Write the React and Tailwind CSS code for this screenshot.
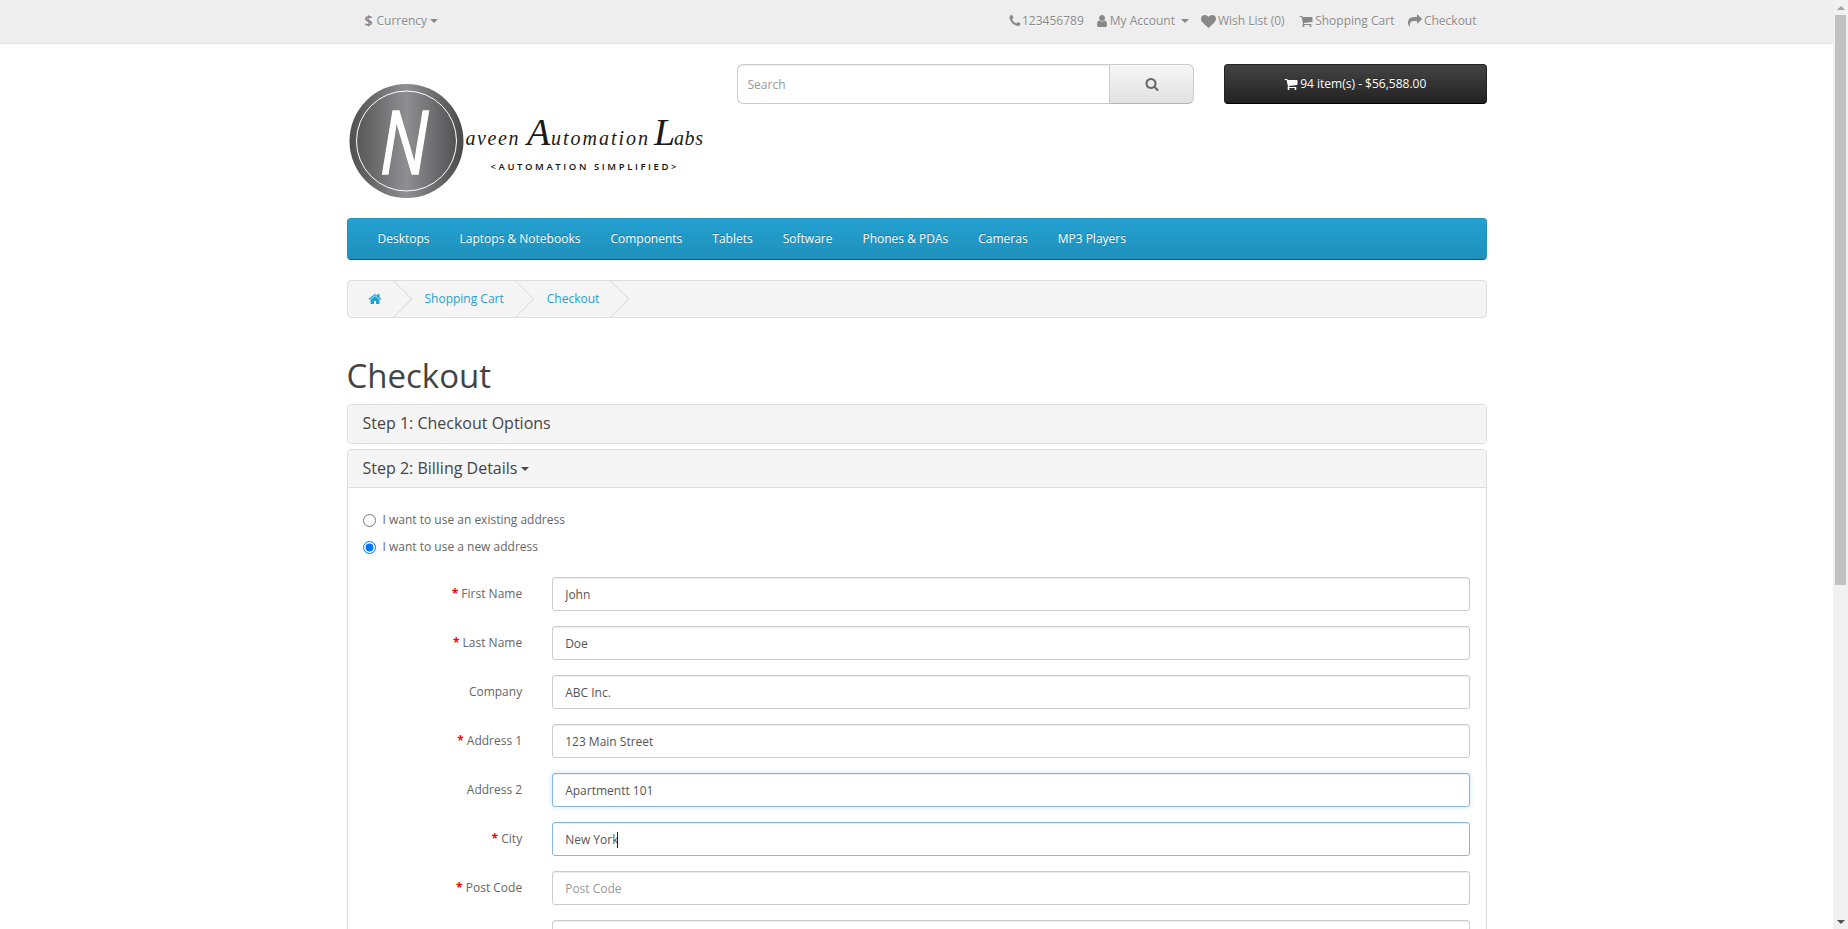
import React from 'react'

const FONT = "font-['Open_Sans',sans-serif]"

const ICONS = {
  phone: 'M1600 1240q0 27-10 70.5t-21 68.5q-21 50-122 106-94 51-186 51-27 0-53-3.5t-57.5-12.5-47-14.5-55.5-20.5-49-18q-98-35-175-83-127-79-264-216t-216-264q-48-77-83-175-3-9-18-49t-20.5-55.5-14.5-47-12.5-57.5-3.5-53q0-92 51-186 56-101 106-122 25-11 68.5-21t70.5-10q14 0 21 3 18 6 53 76 11 19 30 54t35 63.5 31 53.5q3 4 17.5 25t21.5 35.5 7 28.5q0 20-28.5 50t-62 55-62 53-28.5 46q0 9 5 22.5t8.5 20.5 14 24 11.5 19q76 137 174 235t235 174q2 1 19 11.5t24 14 20.5 8.5 22.5 5q18 0 46-28.5t53-62 55-62 50-28.5q14 0 28.5 7t35.5 21.5 25 17.5q25 15 53.5 31t63.5 35 54 30q70 35 76 53 3 7 3 21z',
  user: 'M1536 1399q0 109-62.5 187t-150.5 78h-854q-88 0-150.5-78t-62.5-187q0-85 8.5-160.5t31.5-152 58.5-131 94-89 134.5-34.5q131 128 313 128t313-128q76 0 134.5 34.5t94 89 58.5 131 31.5 152 8.5 160.5zm-256-887q0 159-112.5 271.5t-271.5 112.5-271.5-112.5-112.5-271.5 112.5-271.5 271.5-112.5 271.5 112.5 112.5 271.5z',
  heart: 'M896 1664q-26 0-44-18l-624-602q-10-8-27.5-26t-55.5-65.5-68-97.5-53.5-121-23.5-138q0-220 127-344t351-124q62 0 126.5 21.5t120 58 95.5 68.5 76 68q36-36 76-68t95.5-68.5 120-58 126.5-21.5q224 0 351 124t127 344q0 221-229 450l-623 600q-18 18-44 18z',
  cart: 'M704 1536q0 52-38 90t-90 38-90-38-38-90 38-90 90-38 90 38 38 90zm896 0q0 52-38 90t-90 38-90-38-38-90 38-90 90-38 90 38 38 90zm128-1088v512q0 24-16.5 42.5t-40.5 21.5l-1044 122q13 60 13 70 0 16-24 64h920q26 0 45 19t19 45-19 45-45 19h-1024q-26 0-45-19t-19-45q0-11 8-31.5t16-36 21.5-40 15.5-29.5l-177-823h-204q-26 0-45-19t-19-45 19-45 45-19h256q16 0 28.5 6.5t19.5 15.5 13 24.5 8 26 5.5 29.5 4.5 26h1201q26 0 45 19t19 45z',
  share: 'M1792 640q0 26-19 45l-512 512q-19 19-45 19t-45-19-19-45v-256h-224q-98 0-175.5 6t-154 21.5-133 42.5-105.5 69.5-80 101-48.5 138.5-17.5 181q0 55 5 123 0 6 2.5 23.5t2.5 26.5q0 15-8.5 25t-23.5 10q-16 0-28-17-7-9-13-22t-13.5-30-10.5-24q-127-285-127-451 0-199 53-333 162-403 875-403h224v-256q0-26 19-45t45-19 45 19l512 512q19 19 19 45z',
  search: 'M1216 832q0-185-131.5-316.5t-316.5-131.5-316.5 131.5-131.5 316.5 131.5 316.5 316.5 131.5 316.5-131.5 131.5-316.5zm512 832q0 52-38 90t-90 38q-54 0-90-38l-343-342q-179 124-399 124-143 0-273.5-55.5t-225-150-150-225-55.5-273.5 55.5-273.5 150-225 225-150 273.5-55.5 273.5 55.5 225 150 150 225 55.5 273.5q0 220-124 399l343 343q37 37 37 90z',
  home: 'M1472 992v480q0 26-19 45t-45 19h-384v-384h-256v384h-384q-26 0-45-19t-19-45v-480q0-1 .5-3t.5-3l575-474 575 474q1 2 1 6zm223-69l-62 74q-8 9-21 11h-3q-13 0-21-7l-692-577-692 577q-12 8-24 7-13-2-21-11l-62-74q-8-10-7-23.5t11-21.5l719-599q32-26 76-26t76 26l244 204v-195q0-14 9-23t23-9h192q14 0 23 9t9 23v408l219 182q10 8 11 21.5t-7 23.5z',
}

const Icon = ({ name, className = 'w-[14px] h-[14px]' }) => (
  <svg viewBox="0 0 1792 1792" className={`inline-block shrink-0 fill-current ${className}`}>
    <path d={ICONS[name]} />
  </svg>
)

const Caret = ({ className = 'ml-1 border-t-[4px] border-x-[4px] border-t-[#888]' }) => (
  <span className={`inline-block w-0 h-0 border-x-transparent ${className}`} />
)

const MENU = ['Desktops', 'Laptops & Notebooks', 'Components', 'Tablets', 'Software', 'Phones & PDAs', 'Cameras', 'MP3 Players']

const FIELDS = [
  { label: 'First Name', value: 'John', required: true },
  { label: 'Last Name', value: 'Doe', required: true },
  { label: 'Company', value: 'ABC Inc.' },
  { label: 'Address 1', value: '123 Main Street', required: true },
  { label: 'Address 2', value: 'Apartmentt 101', focus: 'glow' },
  { label: 'City', value: 'New York', required: true, focus: 'line', caret: true },
  { label: 'Post Code', placeholder: 'Post Code', required: true },
  // next row starts right at the fold, only its input shows
  { label: '', placeholder: '' },
]

function Logo() {
  const script = { fill: '#1a1a1a', fontFamily: "'Liberation Serif',serif", fontStyle: 'italic' }
  return (
    <svg viewBox="0 0 360 122" className="block w-[360px] h-[122px]">
      <defs>
        <linearGradient id="disc" x1="0" x2="1" y1="0" y2="0">
          <stop offset="0" stopColor="#4f4f4f" />
          <stop offset="0.5" stopColor="#8f8f92" />
          <stop offset="1" stopColor="#4a4a4a" />
        </linearGradient>
      </defs>
      <circle cx="59.5" cy="60" r="57" fill="url(#disc)" />
      <circle cx="59.5" cy="60" r="50" fill="none" stroke="#fff" strokeWidth="1" />
      <text x="0" y="0" transform="translate(57 93) scale(1.15 1.45)" textAnchor="middle" fill="#fff" stroke="#fff" strokeWidth="1" fontSize="60" fontFamily="'Open Sans',sans-serif" fontStyle="italic">N</text>
      <text x="118.5" y="64" {...script} fontSize="20" textLength="53" lengthAdjust="spacing">aveen</text>
      <text x="180" y="64" {...script} fontSize="38">A</text>
      <text x="204" y="64" {...script} fontSize="20" textLength="97" lengthAdjust="spacing">utomation</text>
      <text x="307" y="64" {...script} fontSize="38">L</text>
      <text x="327" y="64" {...script} fontSize="20" textLength="29" lengthAdjust="spacing">abs</text>
      <text x="143.5" y="89" fill="#111" fontSize="9.5" fontWeight="600" fontFamily="'Open Sans',sans-serif" textLength="186" lengthAdjust="spacing">&lt;AUTOMATION SIMPLIFIED&gt;</text>
    </svg>
  )
}

function Crumb({ children }) {
  return (
    <li className="relative flex items-center h-5 px-5">
      {children}
      {/* chevron divider */}
      <span className="absolute top-[-3px] right-[-5px] w-[26px] h-[26px] rotate-45 border-t border-r border-[#ddd]" />
    </li>
  )
}

function Field({ field }) {
  const border = field.focus ? 'border-[#85b7e0]' : 'border-[#ccc]'
  const shadow = field.focus === 'glow'
    ? 'shadow-[inset_0_1px_1px_rgba(0,0,0,0.075),0_0_5px_rgba(102,175,233,0.35)]'
    : 'shadow-[inset_0_1px_1px_rgba(0,0,0,0.075)]'
  return (
    <div className="flex mb-[15px]">
      <label className="w-[16.66666667%] shrink-0 px-[15px] pt-[7px] text-right text-[#666]">
        {field.required && <span className="text-[#f00] font-bold">* </span>}
        {field.label}
      </label>
      <div className="relative w-[83.33333333%] px-[15px]">
        <input
          readOnly
          value={field.value ?? ''}
          placeholder={field.placeholder}
          className={`block w-full h-[34px] px-3 py-1.5 bg-white border rounded-[3px] text-xs text-[#555] outline-none placeholder:text-[#999] ${border} ${shadow}`}
        />
        {field.caret && <span className="absolute left-[80px] top-[10px] w-px h-4 bg-[#222]" />}
      </div>
    </div>
  )
}

export default function App() {
  return (
    <div className={`flex h-[929px] overflow-hidden bg-white text-xs leading-5 text-[#666] ${FONT}`}>
      <main className="flex-1 min-w-0 overflow-hidden">
        {/* Top bar */}
        <nav className="h-[44px] bg-[#eee] border-b border-[#e2e2e2] pt-1 text-[#888] [text-shadow:0_1px_0_#fff]">
          <div className="w-[1170px] mx-auto px-[15px] flex justify-between">
            <div className="pl-[18px] flex items-center h-[34px]">
              <span className="text-sm font-bold">$</span>
              <span className="ml-1">Currency</span>
              <Caret className="ml-[3px] border-t-[4px] border-x-[4px] border-t-[#888]" />
            </div>
            <ul className="flex items-center h-[30px] mt-[2px] pr-[10px]">
              <li className="flex items-center"><Icon name="phone" className="w-[14px] h-[14px]" />123456789</li>
              <li className="flex items-center gap-[1px] ml-[11px]"><Icon name="user" className="w-[14px] h-[14px]" />My Account<Caret className="ml-[5px] border-t-[4px] border-x-[4px] border-t-[#888]" /></li>
              <li className="flex items-center gap-[2px] ml-[12px]"><Icon name="heart" className="w-[15px] h-[15px]" />Wish List (0)</li>
              <li className="flex items-center gap-[2px] ml-[14.5px]"><Icon name="cart" className="w-[14px] h-[14px]" />Shopping Cart</li>
              <li className="flex items-center gap-[2px] ml-[13.5px]"><Icon name="share" className="w-[14px] h-[14px]" />Checkout</li>
            </ul>
          </div>
        </nav>

        {/* Header */}
        <header className="w-[1170px] mx-auto px-[15px] pt-5 flex h-[174px]">
          <div className="w-[375px] pt-[17px]"><Logo /></div>
          <div className="ml-[15px] w-[457.5px] flex h-[40px]">
            <input
              readOnly
              placeholder="Search"
              className="flex-1 min-w-0 h-[40px] px-[10px] bg-white border border-[#ccc] border-r-0 rounded-l-[6px] text-xs outline-none placeholder:text-[#999] shadow-[inset_0_1px_1px_rgba(0,0,0,0.075)]"
            />
            <button className="w-[85px] h-[40px] flex items-center justify-center border border-[#ccc] border-b-[#b3b3b3] rounded-r-[6px] bg-[linear-gradient(#f6f6f6,#e2e2e2)] text-[#777]">
              <Icon name="search" className="w-[14px] h-[14px] text-[#666]" />
            </button>
          </div>
          <div className="ml-auto w-[262.5px]">
            <button className="w-full h-[40px] flex items-center justify-center gap-[2px] rounded-[4px] border border-[#222] border-b-black bg-[linear-gradient(#444,#222)] text-xs leading-[18px] text-white [text-shadow:0_-1px_0_rgba(0,0,0,0.25)]">
              <Icon name="cart" className="w-[14px] h-[14px]" /> 94 item(s) - $56,588.00
            </button>
          </div>
        </header>

        <div className="w-[1170px] mx-auto px-[15px]">
          {/* Menu */}
          <ul className="flex h-[42px] mb-5 px-[15px] items-center rounded-[4px] border border-[#1f90bb] border-b-[#145e7a] bg-[linear-gradient(#23a1d1,#1f90bb)] text-white [text-shadow:0_-1px_0_rgba(0,0,0,0.25)]">
            {MENU.map(item => (
              <li key={item} className="px-[15px]">{item}</li>
            ))}
          </ul>

          {/* Breadcrumb */}
          <ul className="flex gap-[3px] h-[38px] mb-5 items-center rounded-[4px] border border-[#ddd] bg-[#f5f5f5] overflow-hidden">
            <Crumb><Icon name="home" className="w-[14px] h-[14px] text-[#23a1d1]" /></Crumb>
            <Crumb><span className="text-[#23a1d1]">Shopping Cart</span></Crumb>
            <Crumb><span className="text-[#23a1d1]">Checkout</span></Crumb>
          </ul>

          <h1 className="pt-5 mb-[10px] text-[33px] leading-[36.3px] font-normal text-[#444]">Checkout</h1>

          {/* Step 1 */}
          <section className="mb-[5px] rounded-[4px] border border-[#ddd] bg-white">
            <h4 className="px-[15px] py-[10px] bg-[#f5f5f5] rounded-[3px] text-base leading-[17.6px] text-[#444]">Step 1: Checkout Options</h4>
          </section>

          {/* Step 2 */}
          <section className="rounded-[4px] border border-[#ddd] bg-white">
            <h4 className="flex items-center px-[15px] py-[10px] bg-[#f5f5f5] rounded-t-[3px] text-base leading-[17.6px] text-[#444]">
              Step 2: Billing Details
              <Caret className="ml-1 border-t-[4px] border-x-[4px] border-t-[#444]" />
            </h4>
            <div className="border-t border-[#ddd] pt-[15px]">
              <div className="px-[15px] flex flex-col gap-[7px] mt-[7px] mb-5">
                <label className="flex items-center h-5">
                  <input type="radio" name="address" readOnly className="w-[13px] h-[13px] m-0 mt-[1px]" />
                  <span className="ml-[7px]">I want to use an existing address</span>
                </label>
                <label className="flex items-center h-5">
                  <input type="radio" name="address" readOnly checked className="w-[13px] h-[13px] m-0 mt-[1px]" />
                  <span className="ml-[7px]">I want to use a new address</span>
                </label>
              </div>
              {FIELDS.map((f, i) => <Field key={i} field={f} />)}
            </div>
          </section>
        </div>
      </main>

      {/* Browser scrollbar */}
      <aside className="w-[15px] shrink-0 flex flex-col items-center bg-[#f1f1f1]">
        <span className="mt-[6px] w-0 h-0 border-x-[4px] border-x-transparent border-b-[4px] border-b-[#a3a3a3]" />
        <span className="mt-[5px] w-[11px] h-[570px] bg-[#c1c1c1]" />
        <span className="mt-auto mb-[5px] w-0 h-0 border-x-[4px] border-x-transparent border-t-[4px] border-t-[#505050]" />
      </aside>
    </div>
  )
}
